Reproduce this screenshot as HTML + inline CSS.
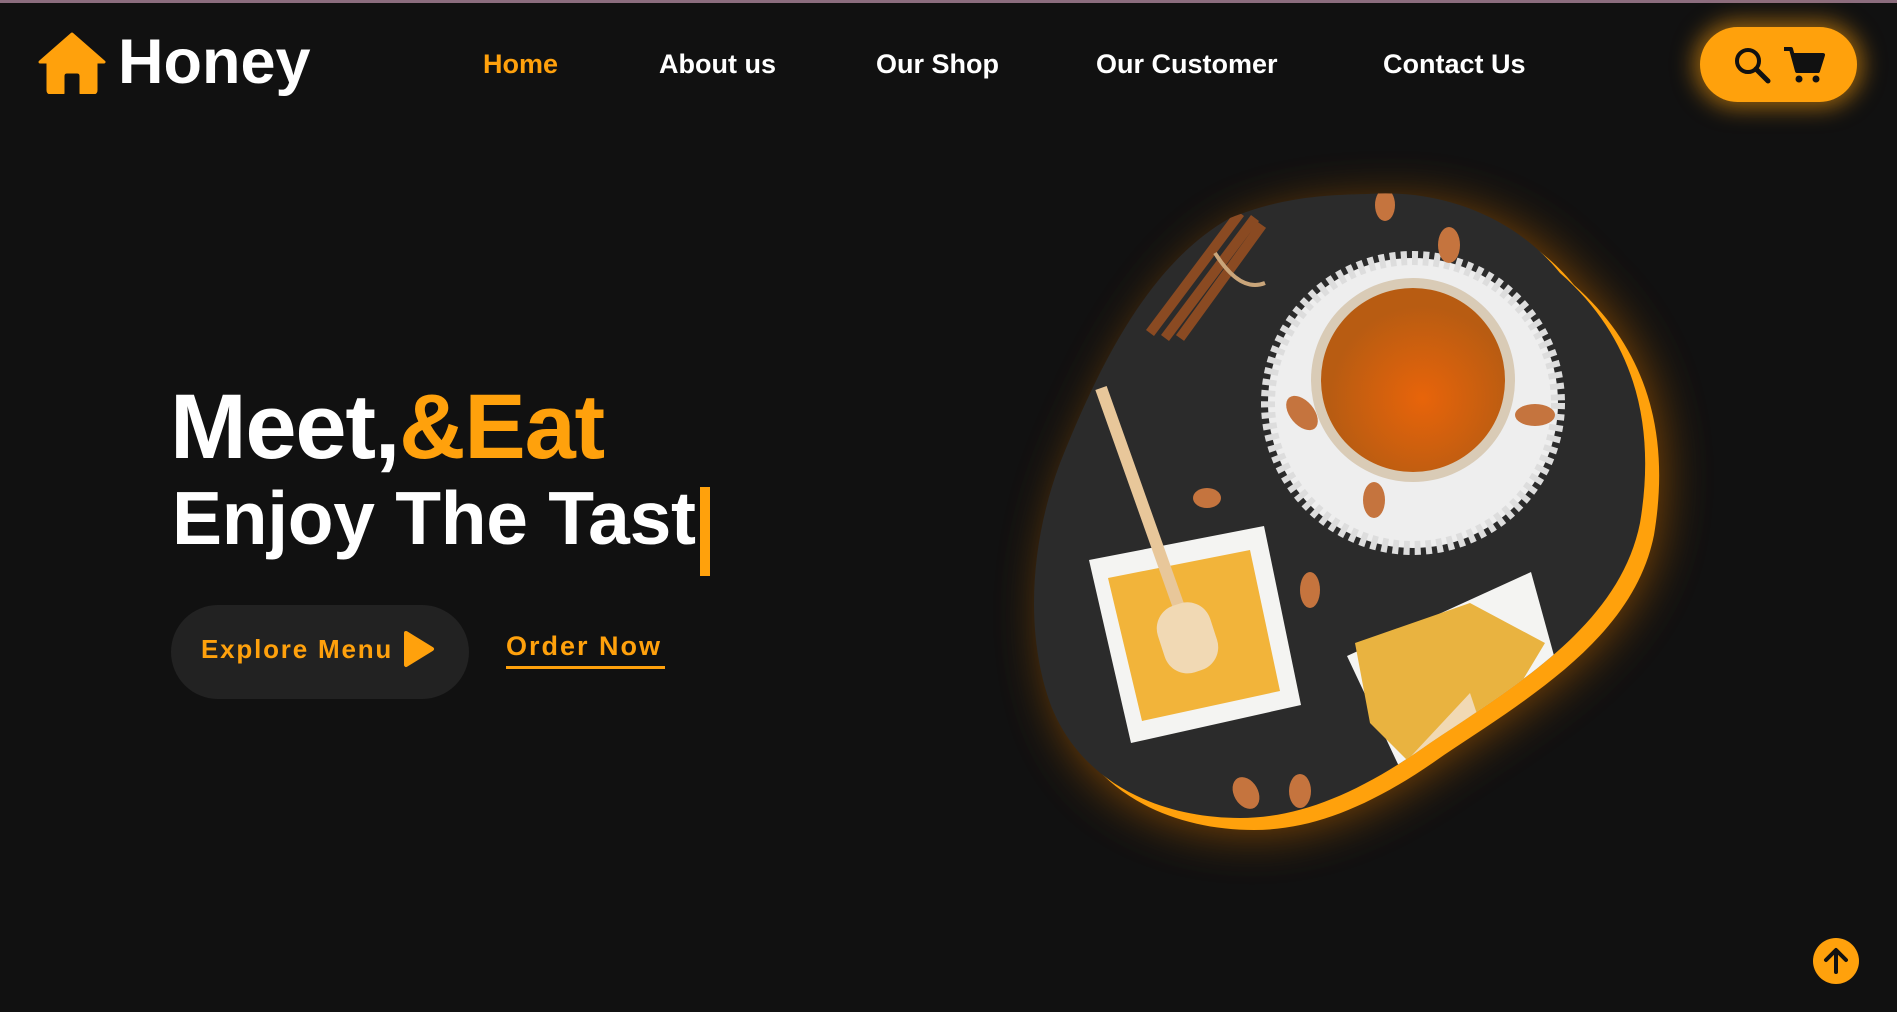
<!DOCTYPE html>
<html><head><meta charset="utf-8"><style>
*{margin:0;padding:0;box-sizing:border-box}
body{width:1897px;height:1009px;background:#111;overflow:hidden;position:relative;font-family:"Liberation Sans",sans-serif;border-top:3px solid #8c6d7e}
.logo{position:absolute;left:38px;top:28px;display:flex;align-items:center}
.logo span{color:#fff;font-weight:bold;font-size:63px;letter-spacing:0;margin-left:12px;line-height:1}
nav a{position:absolute;top:46px;color:#fff;font-weight:bold;font-size:27px;text-decoration:none;letter-spacing:0}
.pill{position:absolute;left:1700px;top:24px;width:157px;height:75px;border-radius:38px;background:#ffa10c;box-shadow:0 0 22px 6px rgba(255,160,12,.55);display:flex;align-items:center;justify-content:center;gap:10px}
h1{position:absolute;left:170px;top:378px;color:#fff;font-size:92px;line-height:1;font-weight:bold;letter-spacing:-1.2px}
h1 b{color:#ffa10c}
h2{position:absolute;left:172px;top:478px;color:#fff;font-size:75px;line-height:1;font-weight:bold;letter-spacing:-0.3px;white-space:nowrap}
.cur{display:inline-block;vertical-align:top;margin-left:4px;margin-top:6px;width:10px;height:89px;background:#ffa10c}
.btn{position:absolute;left:171px;top:602px;width:298px;height:94px;border-radius:47px;background:#222;color:#ffa10c;font-weight:bold;font-size:26px;letter-spacing:1.8px;display:flex;align-items:center;padding-left:30px;padding-bottom:6px}
.order{position:absolute;left:506px;top:628px;color:#ffa10c;font-weight:bold;font-size:27px;letter-spacing:2px;border-bottom:3px solid #ffa10c;padding-bottom:4px;width:159px;white-space:nowrap}
.top{position:absolute;left:1813px;top:935px;width:46px;height:46px;border-radius:50%;background:#ffa10c;display:flex;align-items:center;justify-content:center}
</style></head><body>
<div class="logo"><svg width="68" height="62" viewBox="0 0 68 62"><path d="M34 2 L66 30 L58 30 L58 58 Q58 61 55 61 L43 61 L43 44 Q43 40 39 40 L29 40 Q25 40 25 44 L25 61 L13 61 Q10 61 10 58 L10 30 L2 30 Z" fill="#ffa10c" stroke="#ffa10c" stroke-width="3" stroke-linejoin="round"/></svg><span>Honey</span></div>
<nav><a style="left:483px;color:#ffa10c">Home</a><a style="left:659px">About us</a><a style="left:876px">Our Shop</a><a style="left:1096px">Our Customer</a><a style="left:1383px">Contact Us</a></nav>
<div class="pill"><svg width="40" height="40" viewBox="0 0 40 40"><circle cx="16" cy="16" r="11" fill="none" stroke="#111" stroke-width="4"/><path d="M24 24 L36 36" stroke="#111" stroke-width="5" stroke-linecap="round"/></svg><svg width="44" height="40" viewBox="0 0 44 40"><path d="M2 4 H9 L15 26 H36 L41 10 H11" fill="none" stroke="#111" stroke-width="4" stroke-linejoin="round"/><path d="M12 10 H41 L36 26 H15 Z" fill="#111"/><circle cx="17" cy="34" r="3.5" fill="#111"/><circle cx="34" cy="34" r="3.5" fill="#111"/></svg></div>
<h1>Meet,<b>&amp;Eat</b></h1>
<h2>Enjoy The Tast<span class="cur"></span></h2>
<div class="btn">Explore Menu<svg style="margin-left:10px" width="32" height="38" viewBox="0 0 32 38"><path d="M3 3 L29 19 L3 35 Z" fill="#ffa10c" stroke="#ffa10c" stroke-width="4" stroke-linejoin="round"/></svg></div>
<div class="order">Order Now</div>
<svg style="position:absolute;left:0;top:0" width="1897" height="1009">
<defs><filter id="g" x="-30%" y="-30%" width="160%" height="160%"><feGaussianBlur stdDeviation="25"/></filter>
<clipPath id="c"><path id="b" d="M1367,191 C1450,185 1520,220 1560,270 C1640,340 1655,430 1640,520 C1620,620 1520,680 1430,740 C1360,790 1300,815 1240,815 C1160,815 1080,780 1050,700 C1025,630 1030,540 1060,460 C1100,360 1150,260 1230,215 C1280,195 1320,192 1367,191 Z"/></clipPath>
<radialGradient id="h" cx="0.55" cy="0.6"><stop offset="0" stop-color="#e8640a"/><stop offset="1" stop-color="#b85c12"/></radialGradient></defs>
<g transform="translate(14,12)"><use href="#b" fill="#a85a08" filter="url(#g)" opacity=".8"/><use href="#b" fill="#ffa10c"/></g>
<g clip-path="url(#c)">
<rect x="1000" y="180" width="700" height="660" fill="#2b2b2b"/>
<path d="M1150 330 L1240 210 M1165 335 L1255 215 M1180 335 L1262 222" stroke="#8a4a22" stroke-width="10"/>
<path d="M1215 250 Q1240 290 1265 280" stroke="#c9a57a" stroke-width="4" fill="none"/>
<circle cx="1413" cy="400" r="145" fill="#eee" stroke="#ddd" stroke-width="14" stroke-dasharray="6 5"/>
<circle cx="1413" cy="377" r="102" fill="#d9cbb6"/>
<circle cx="1413" cy="377" r="92" fill="url(#h)"/>
<polygon points="1089,557 1264,523 1301,702 1131,740" fill="#f4f4f2"/>
<polygon points="1108,575 1250,547 1280,688 1142,718" fill="#f2b43a"/>
<line x1="1101" y1="385" x2="1192" y2="641" stroke="#e8c79a" stroke-width="12"/>
<rect x="1160" y="600" width="55" height="70" rx="24" fill="#f1d9b4" transform="rotate(-18 1187 635)"/>
<polygon points="1347,653 1531,569 1561,678 1404,774" fill="#f4f4f2"/>
<polygon points="1355,640 1470,600 1545,640 1500,715 1410,760 1370,720" fill="#e9b340"/>
<polygon points="1400,765 1470,690 1480,720 1420,780" fill="#f1d9b4"/>
<g fill="#c5743e"><ellipse cx="1385" cy="202" rx="10" ry="16"/><ellipse cx="1449" cy="242" rx="11" ry="18"/><ellipse cx="1302" cy="410" rx="12" ry="20" transform="rotate(-40 1302 410)"/><ellipse cx="1535" cy="412" rx="20" ry="11"/><ellipse cx="1374" cy="497" rx="11" ry="18"/><ellipse cx="1207" cy="495" rx="14" ry="10"/><ellipse cx="1310" cy="587" rx="10" ry="18"/><ellipse cx="1246" cy="790" rx="12" ry="17" transform="rotate(-30 1246 790)"/><ellipse cx="1300" cy="788" rx="11" ry="17"/></g>
</g>
</svg>
<div class="top"><svg width="30" height="30" viewBox="0 0 30 30"><path d="M15 26 V5 M5 14 L15 4 L25 14" stroke="#111" stroke-width="4" fill="none" stroke-linecap="round" stroke-linejoin="round"/></svg></div>
</body></html>
